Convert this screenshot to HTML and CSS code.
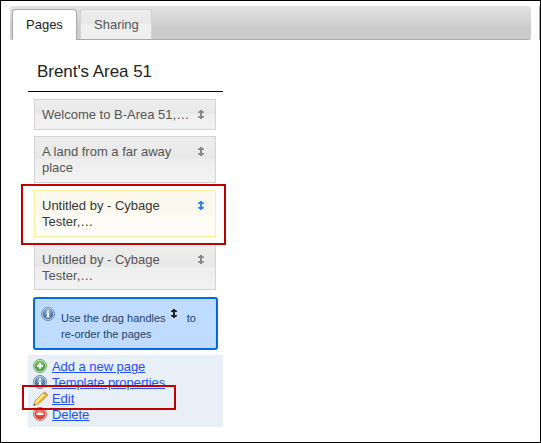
FILE: index.html
```
<!DOCTYPE html>
<html lang="en">
<head>
<meta charset="utf-8">
<title>Pages</title>
<link rel="stylesheet" href="styles.css">
</head>
<body>
<svg class="defs" width="0" height="0" aria-hidden="true">
  <defs>
    <symbol id="handle" viewBox="0 0 6 9"><path d="M2 0h2v1h1v1h1v1H4v3h2v1H5v1H4v1H2V8H1V7H0V6h2V3H0V2h1V1h1z"/><path d="M0 1h6v1H0zM0 7h6v1H0z" opacity=".45"/></symbol>
    <radialGradient id="green" cy=".3"><stop offset="0" stop-color="#8fcf7d"/><stop offset="1" stop-color="#4ea340"/></radialGradient>
    <radialGradient id="blue" cy=".3"><stop offset="0" stop-color="#9dbbdc"/><stop offset="1" stop-color="#4878ae"/></radialGradient>
    <radialGradient id="red" cy=".3"><stop offset="0" stop-color="#f69a8a"/><stop offset="1" stop-color="#dc4237"/></radialGradient>
    <symbol id="info" viewBox="0 0 14 14"><circle cx="7" cy="7" r="6.5" fill="#d3dfec" stroke="#5b7da5" stroke-width=".9"/><circle cx="7" cy="7" r="5.3" fill="url(#blue)"/><path d="M6 3h2v1.6H6zM5.3 5.6H8v4h.8v1H5.3v-1H6v-3h-.7z" fill="#fff"/></symbol>
  </defs>
</svg>
<div class="frame">
  <div class="tabs">
    <div class="tabbar">
      <a class="tab active">Pages</a>
      <a class="tab">Sharing</a>
    </div>
    <div class="next-bar"></div>
  </div>
  <div class="sidebar">
    <h1>Brent's Area 51</h1>
    <ul class="pages">
      <li><span>Welcome to B-Area 51,…</span><svg class="handle"><use href="#handle"/></svg></li>
      <li class="tall"><span>A land from a far away<br>place</span><svg class="handle"><use href="#handle"/></svg></li>
      <li class="tall selected"><span>Untitled by - Cybage<br>Tester,…</span><svg class="handle"><use href="#handle"/></svg></li>
      <li class="tall last"><span>Untitled by - Cybage<br>Tester,…</span><svg class="handle"><use href="#handle"/></svg></li>
    </ul>
    <div class="hint">
      <svg class="icon"><use href="#info"/></svg>
      <p>Use the drag handles <svg class="handle"><use href="#handle"/></svg> to<br>re-order the pages</p>
    </div>
    <div class="actions">
      <div class="row"><svg class="icon" viewBox="0 0 14 14"><circle cx="7" cy="7" r="6.5" fill="#d5e8ce" stroke="#5c9f4d" stroke-width=".9"/><circle cx="7" cy="7" r="5.3" fill="url(#green)"/><path d="M6 4h2v2h2v2H8v2H6V8H4V6h2z" fill="#fff"/></svg><a>Add a new page</a></div>
      <div class="row"><svg class="icon"><use href="#info"/></svg><a>Template properties</a></div>
      <div class="row"><svg class="icon pencil" viewBox="0 0 16 16"><path d="M.7 14.4l1.4-4.6L10.4 1.6q1.2-1 2.3 0l1.2 1.2q1 1.2 0 2.3L5.4 13z" fill="#f7d23e" stroke="#b07f2a" stroke-width=".8"/><path d="M3.6 10.4l7-7" stroke="#fff09a" stroke-width="1.6"/><path d="M5.2 12.2l7-7" stroke="#e3ab2c" stroke-width="1.1"/><path d="M10.9 1.9q1-.7 1.8.1l.9.9q.8.9 0 1.8l-.6.5-2.7-2.7z" fill="#dba06a"/><path d="M.9 14.2l1.4-4.1 2.8 2.7z" fill="#f3d4a2"/><path d="M.7 14.4l.6-2 1.4 1.4z" fill="#4b3524"/></svg><a>Edit</a></div>
      <div class="row"><svg class="icon" viewBox="0 0 14 14"><circle cx="7" cy="7" r="6.5" fill="#f7cac4" stroke="#cc5549" stroke-width=".9"/><circle cx="7" cy="7" r="5.3" fill="url(#red)"/><path d="M3.6 6h6.8v2H3.6z" fill="#fff"/></svg><a>Delete</a></div>
    </div>
  </div>
  <div class="callout callout-page"></div>
  <div class="callout callout-edit"></div>
</div>
</body>
</html>
```
FILE: styles.css
```
* { box-sizing: border-box; }
body { margin: 0; background: #fff; font-family: "Liberation Sans", Arial, sans-serif; font-size: 13px; }
.defs { position: absolute; }
.frame { position: relative; width: 541px; height: 443px; border: 1px solid #000; padding: 5px 0 0; overflow: hidden; }
.tabs { display: flex; justify-content: space-between; height: 34px; padding-left: 9px; }
.tabbar { display: flex; align-items: flex-start; gap: 3px; width: 521px; flex: none; height: 34px; padding: 3px 0 0 2px; border-bottom: 1px solid #aaa; border-radius: 3px; background: linear-gradient(#e3e3e3, #cacaca 70%, #cdcdcd); }
.next-bar { width: 1px; background: #aaa; }
.tab { display: block; height: 30px; width: 72px; border: 1px solid #d3d3d3; border-bottom: 0; border-radius: 4px 4px 0 0; background: linear-gradient(#ededed 0, #e8e8e8 49%, #eee 50%, #f0f0f0); color: #555; line-height: 29px; padding-left: 13px; }
.tab.active { width: 65px; height: 31px; border-color: #aaa; background: #fff; color: #212121; }
.sidebar { width: 195px; margin-left: 27px; }
h1 { margin: 0 0 7px; height: 52px; padding: 21px 0 0 9px; border-bottom: 1px solid #000; font-size: 17px; line-height: 22px; font-weight: 400; color: #222; letter-spacing: -.05px; }
.pages { list-style: none; margin: 0; padding: 0 7px 0 6px; }
.pages li { display: flex; justify-content: space-between; height: 31px; margin-bottom: 6px; padding: 7px 11px 0 7px; border: 1px solid #d3d3d3; background: linear-gradient(#ededed 0, #e8e8e8 49%, #eee 50%, #f2f2f2); color: #555; line-height: 16px; white-space: nowrap; }
.pages .tall { height: 47px; margin-bottom: 7px; }
.pages .last { height: 46px; }
.pages .selected { border-color: #fcefa1; background: linear-gradient(#fbf9ee 0, #fbf9ee 45%, #fdfcf6 60%, #fdfcf5); color: #363636; }
.handle { width: 6px; height: 9px; fill: #888; shape-rendering: crispEdges; }
.pages .handle { margin-top: 3px; flex: none; }
.selected .handle { fill: #2e83ff; }
.hint { display: flex; width: 185px; height: 53px; margin: 0 0 5px 5px; padding: 8px 0 0 6px; border: 2px solid #0068e1; border-radius: 3px; background: #bfdbff; color: #1d436e; }
.hint p { margin: 3px 0 0 6px; font-size: 11px; line-height: 16px; white-space: nowrap; }
.hint .handle { position: relative; top: -2px; fill: #222; margin: 0 7px 0 2px; vertical-align: 2px; }
.icon { width: 14px; height: 14px; flex: none; }
.actions { width: 195px; height: 72px; padding: 4px 0 0 5px; background: #e8eff7; }
.row { display: flex; height: 16px; }
.row a { margin-left: 5px; color: #1f50ff; text-decoration: underline; line-height: 16px; letter-spacing: -.05px; }
.row .pencil { width: 16px; height: 16px; margin: 0 -2px 0 0; }
.callout { position: absolute; border: 2px solid #c00000; }
.callout-page { left: 20px; top: 183px; width: 205px; height: 61px; }
.callout-edit { left: 21px; top: 384px; width: 154px; height: 25px; }
```
